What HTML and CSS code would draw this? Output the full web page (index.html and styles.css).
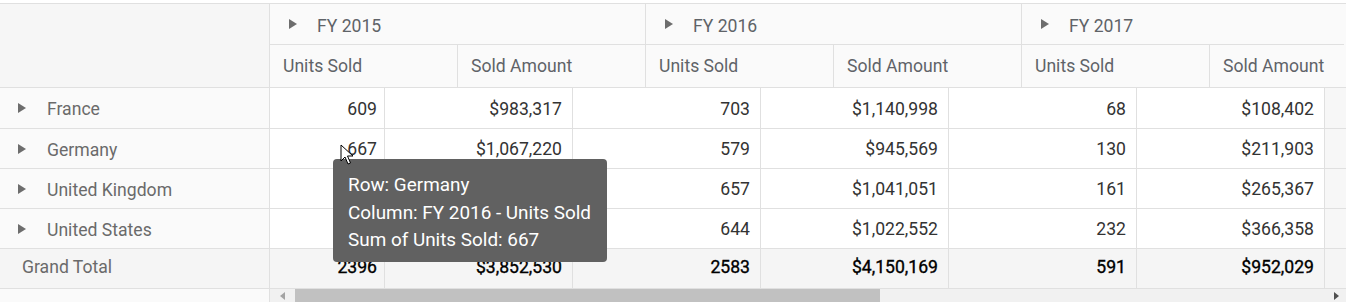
FILE: index.html
```html
<!DOCTYPE html>
<html>
<head>
<meta charset="utf-8">
<link rel="stylesheet" href="styles.css">
</head>
<body>
<div class="pivot">
  <div class="head">
    <div class="corner"></div>
    <div class="col-heads">
      <div class="fy fy1"><span class="tri"></span>FY 2015</div>
      <div class="fy fy2"><span class="tri"></span>FY 2016</div>
      <div class="fy fy3"><span class="tri"></span>FY 2017</div>
      <div class="mh">Units Sold</div>
      <div class="mh">Sold Amount</div>
      <div class="mh">Units Sold</div>
      <div class="mh">Sold Amount</div>
      <div class="mh">Units Sold</div>
      <div class="mh last">Sold Amount</div>
    </div>
  </div>
  <div class="row first">
    <div class="rh"><span class="tri"></span>France</div>
    <div class="v w1">609</div><div class="v">$983,317</div><div class="v">703</div><div class="v">$1,140,998</div><div class="v">68</div><div class="v">$108,402</div><div class="fill"></div>
  </div>
  <div class="row">
    <div class="rh"><span class="tri"></span>Germany</div>
    <div class="v w1">667</div><div class="v">$1,067,220</div><div class="v">579</div><div class="v">$945,569</div><div class="v">130</div><div class="v">$211,903</div><div class="fill"></div>
  </div>
  <div class="row">
    <div class="rh"><span class="tri"></span>United Kingdom</div>
    <div class="v w1"></div><div class="v"></div><div class="v">657</div><div class="v">$1,041,051</div><div class="v">161</div><div class="v">$265,367</div><div class="fill"></div>
  </div>
  <div class="row">
    <div class="rh"><span class="tri"></span>United States</div>
    <div class="v w1"></div><div class="v"></div><div class="v">644</div><div class="v">$1,022,552</div><div class="v">232</div><div class="v">$366,358</div><div class="fill"></div>
  </div>
  <div class="row total">
    <div class="rh gt">Grand Total</div>
    <div class="v w1">2396</div><div class="v">$3,852,530</div><div class="v">2583</div><div class="v">$4,150,169</div><div class="v">591</div><div class="v">$952,029</div><div class="fill"></div>
  </div>
  <div class="scroll">
    <div class="sleft"></div>
    <div class="track">
      <span class="arr-l"></span>
      <div class="thumb"></div>
      <span class="arr-r"></span>
    </div>
  </div>

  <div class="tooltip">
    <div>Row: Germany</div>
    <div>Column: FY 2016 - Units Sold</div>
    <div>Sum of Units Sold: 667</div>
  </div>
  <svg class="cursor" width="14" height="22" viewBox="0 0 14 22">
    <path d="M1 1 L1 17 L5 13 L8 20 L10.5 19 L7.5 12 L13 12 Z" fill="#fff" stroke="#000" stroke-width="1"/>
  </svg>
</div>
</body>
</html>
```

FILE: styles.css
```css
* { box-sizing: border-box; }
html, body { margin: 0; padding: 0; background: #fff; }
body { font-family: Roboto, "Liberation Sans", sans-serif; font-size: 17.6px; overflow: hidden; }
.pivot { position: relative; width: 1346px; padding-top: 3px; }
.head { display: flex; border-top: 1px solid #e0e0e0; border-bottom: 1px solid #e0e0e0; height: 85px; }
.corner { width: 270px; flex: none; background: #f6f6f6; border-right: 1px solid #e0e0e0; }
.col-heads {
  flex: 1;
  display: grid;
  grid-template-columns: 188px 188px 188px 188px 188px 134px;
  grid-template-rows: 41px 42px;
  background: #fafafa;
  color: #5f6368;
  overflow: hidden;
}
.fy { display: flex; align-items: center; padding-left: 19px; padding-top: 4px; border-bottom: 1px solid #e0e0e0; border-right: 1px solid #e0e0e0; }
.fy1, .fy2 { grid-column: span 2; }
.fy3 { grid-column: span 2; border-right: none; }
.fy .tri { margin-right: 20px; margin-top: -4px; }
.tri {
  display: inline-block; width: 0; height: 0;
  border-top: 5px solid transparent; border-bottom: 5px solid transparent;
  border-left: 8px solid #6d6d6d;
}
.mh { display: flex; align-items: center; padding-left: 13px; padding-bottom: 1px; border-right: 1px solid #e0e0e0; white-space: nowrap; }
.mh.last { border-right: none; }
.row { display: flex; height: 40px; border-bottom: 1px solid #e0e0e0; }
.row.first { height: 41px; }
.rh {
  width: 270px; flex: none; background: #fafafa; border-right: 1px solid #e0e0e0;
  display: flex; align-items: center; padding-left: 18px; padding-top: 2px; color: #6a6a6a;
}
.rh .tri { margin-right: 21px; margin-top: -2px; }
.rh.gt { padding-left: 22px; padding-top: 0; padding-bottom: 3px; }
.v {
  width: 188px; flex: none; display: flex; align-items: center; justify-content: flex-end;
  padding-right: 10px; padding-top: 1px; border-right: 1px solid #e0e0e0; color: #333; background: #fff;
}
.v.w1 { width: 115px; padding-right: 7px; }
.fill { flex: 1; background: #f7f7f7; }
.total .rh, .total .v { background: #f5f5f5; }
.total .v { color: #000; padding-top: 0; padding-bottom: 3px; -webkit-text-stroke: 0.35px #000; }
.total .fill { background: #f5f5f5; }
.scroll { display: flex; height: 14px; }
.sleft { width: 270px; flex: none; background: #fafafa; border-right: 1px solid #e0e0e0; }
.track { flex: 1; background: #f1f1f1; display: flex; align-items: center; position: relative; }
.arr-l {
  margin-left: 10px; width: 0; height: 0;
  border-top: 4px solid transparent; border-bottom: 4px solid transparent; border-right: 5px solid #a3a3a3;
}
.thumb { margin-left: 10px; width: 585px; height: 100%; background: #c1c1c1; }
.arr-r {
  margin-left: auto; margin-right: 7px; width: 0; height: 0;
  border-top: 4px solid transparent; border-bottom: 4px solid transparent; border-left: 5px solid #505050;
}
.tooltip {
  position: absolute; left: 333px; top: 159px; width: 274px; height: 103px;
  background: #616161; color: #fff; border-radius: 4px;
  padding: 12px 0 0 15px; line-height: 27.5px; font-size: 18.9px; white-space: nowrap;
}
.cursor { position: absolute; left: 340px; top: 144px; }
```
